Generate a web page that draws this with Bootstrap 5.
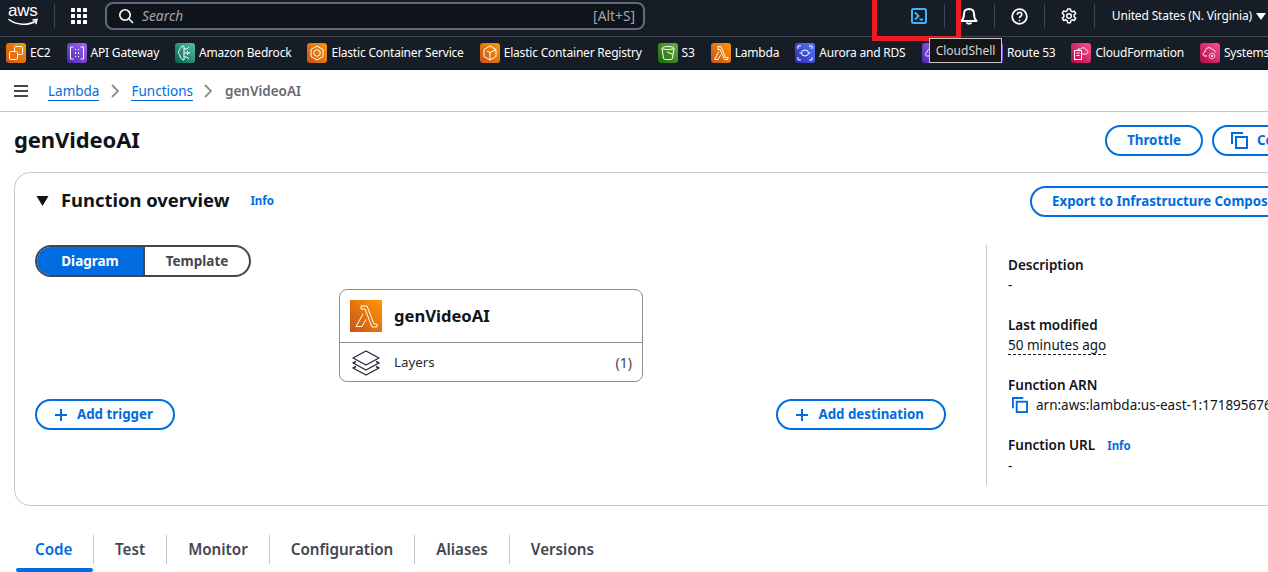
<!DOCTYPE html>
<html lang="en"><head><meta charset="utf-8"><title>genVideoAI - Lambda</title>
<link href="https://cdn.jsdelivr.net/npm/bootstrap@5.3.0/dist/css/bootstrap.min.css" rel="stylesheet">
<style>
html,body{height:572px;overflow:hidden;background:#fff}
body{font-family:"Noto Sans","Open Sans",sans-serif;color:#0f141a;font-size:14px;position:relative}
.topbar{height:37px;background:#161d26;border-bottom:1px solid #424650;color:#fff;padding:0 0 4px 8px}
.logo-box{width:30px;height:30px;position:relative;color:#fff;line-height:1}
.logo-txt{font-family:"Liberation Sans",sans-serif;font-size:17px;letter-spacing:-.3px;display:block;margin-top:1px}
.logo-smile{top:17px}
.vsep{width:1px;height:24px;background:#424650;flex:none}
.grid-ic{margin:0 17px 0 16px}
.searchbox{width:540px;height:28px;border:2px solid #5f6b7a;border-radius:8px;background:#0f141a;color:#a4a4ad;font-size:13.8px;padding:0 8px 0 11px;margin-left:1px}
.searchbox em{margin-left:8px}
.right-tools{margin-left:auto;padding-right:2px}
.tool{width:49px;display:flex;justify-content:center}
.region{font-size:12px;letter-spacing:-.14px;padding-left:17px;white-space:nowrap}
.favbar{height:32px;background:#161d26;color:#fff;font-size:12px;letter-spacing:-.2px;white-space:nowrap;padding-left:6px;gap:16px;overflow:hidden;box-shadow:0 1px 0 #0f141a}
.favitem{gap:4px;flex:none}
.svc{width:20px;height:20px;border-radius:3px;flex:none;display:block}
.crumbs{height:43px;border-bottom:1px solid #c6c6cd;padding:2px 0 0 14px;font-size:13.5px;white-space:nowrap}
.crumbs a{color:#006ce0;text-decoration:none;border-bottom:1px solid #006ce0;line-height:18px}
.crumbs .cur{color:#656871;font-weight:600}
.chev{margin:0 11.5px}
.titlerow{height:60px;padding:0 0 4px 14px}
.titlerow h1{font-size:22px;letter-spacing:-.1px;font-weight:700;margin:0 0 2px}
.titleacts{flex:0 0 163px;overflow:hidden;white-space:nowrap;gap:9px}
.btn-aws{--bs-btn-color:#006ce0;--bs-btn-border-color:#006ce0;--bs-btn-hover-color:#006ce0;--bs-btn-hover-bg:#f0fbff;--bs-btn-hover-border-color:#006ce0;--bs-btn-border-width:2px;--bs-btn-border-radius:20px;--bs-btn-font-weight:700;--bs-btn-font-size:13.3px;--bs-btn-padding-y:0;--bs-btn-padding-x:20px;height:31px;padding-top:1px;white-space:nowrap;display:inline-flex;align-items:center;justify-content:center;gap:9px;flex:none;line-height:1}
.btn-ic{margin-left:-3px}
.wthrottle{width:98px}
.ovcard{margin:0 -64px 0 14px;height:334px;border:1px solid #c6c6cd;border-radius:16px;padding:13px 20px 19px 20px}
.ovhead{height:30px}
.ovtitleblock{flex:0 0 995px;gap:0}
.tri{margin-left:1px}
.ovtitleblock h2{font-size:18.4px;font-weight:700;margin:0 21px 2px 12px}
.infolink{color:#006ce0;font-size:11.5px;font-weight:700;text-decoration:none}
.ovbody{margin-top:29px;height:240px}
.ovleft{flex:0 0 911px;height:185px}
.segs{width:216px;height:32px;border:2px solid #424650;border-radius:20px;overflow:hidden;font-weight:700;font-size:13.5px}
.segs span{display:flex;align-items:center;justify-content:center}
.seg-on{flex:0 0 108px;background:#006ce0;color:#fff;border-right:2px solid #424650}
.seg-off{flex:1;color:#424650}
.nodewrap{margin-left:304px;margin-top:12px;width:304px;height:93px;border:1px solid #8c8c94;border-radius:8px}
.nodetop{height:53px;border-bottom:1px solid #8c8c94;padding-left:10px;gap:12px;font-size:16.6px;font-weight:700}
.nodebot{height:39px;padding:0 10px 0 11px;font-size:13.3px;color:#232b37}
.nodebot .cnt{margin-left:auto;color:#424650;font-size:14px}
.lam{width:32px;height:32px;display:block}
.layers-lbl{margin-left:5px}
.addrow{margin-top:17px}
.ovright{margin-left:40px;border-left:1px solid #c6c6cd;padding-left:21px;height:240px;flex:1;white-space:nowrap;overflow:hidden;font-size:13.5px;line-height:20px}
.kv{height:60px;padding-top:10px}
.kv b{font-weight:600;display:block}
.kv .dash{display:block}
.dashed{border-bottom:1px dashed #0f141a;line-height:17px;display:inline-block}
.tabsrow{height:67px;padding:21px 0 0 16px}
.tabitem{height:29px;margin-top:8px;padding:0 21px;font-size:15.2px;font-weight:600;color:#424650;border-right:1px solid #c6c6cd;display:flex;align-items:center;position:relative;line-height:1}
.tabitem:first-child{padding:0 19px;color:#006ce0;width:78px}
.tabitem:last-child{border-right:0}
.tabbar{position:absolute;left:0;right:0;bottom:-8px;height:4px;background:#006ce0;border-radius:2px}
.redbox{position:absolute;left:872px;top:-5px;width:89px;height:46px;border:5px solid #ed1c24;pointer-events:none;z-index:5}
.tipbox{position:absolute;left:929px;top:38px;width:73px;height:25px;background:#161513;border:1px solid #c6c6cd;color:#d1d5db;font-size:12px;display:flex;align-items:center;justify-content:center;z-index:6}
</style></head>
<body>
<svg width="0" height="0" class="position-absolute">
<defs>
<linearGradient id="gO" x1="0" y1="1" x2="1" y2="0"><stop offset="0" stop-color="#c8511b"/><stop offset="1" stop-color="#ff9900"/></linearGradient>
<linearGradient id="gP" x1="0" y1="1" x2="1" y2="0"><stop offset="0" stop-color="#4d27a8"/><stop offset="1" stop-color="#a166ff"/></linearGradient>
<linearGradient id="gT" x1="0" y1="1" x2="1" y2="0"><stop offset="0" stop-color="#055f4e"/><stop offset="1" stop-color="#56c0a7"/></linearGradient>
<linearGradient id="gG" x1="0" y1="1" x2="1" y2="0"><stop offset="0" stop-color="#1b660f"/><stop offset="1" stop-color="#6cae3e"/></linearGradient>
<linearGradient id="gB" x1="0" y1="1" x2="1" y2="0"><stop offset="0" stop-color="#2e27ad"/><stop offset="1" stop-color="#527fff"/></linearGradient>
<linearGradient id="gR" x1="0" y1="1" x2="1" y2="0"><stop offset="0" stop-color="#b0084d"/><stop offset="1" stop-color="#ff4f8b"/></linearGradient>
</defs>
</svg>

<header class="topbar d-flex align-items-center">
  <div class="logo-box"><span class="logo-txt">aws</span>
    <svg class="position-absolute start-0 logo-smile" width="32" height="9" viewBox="0 0 32 9" fill="none" stroke="#fff" stroke-width="1.5" stroke-linecap="round"><path d="M1 1.5C8 7 20 8 28 3"/><path d="M25 2l4-.5-1 4"/></svg>
  </div>
  <div class="vsep ms-3"></div>
  <svg class="grid-ic" width="16" height="16" viewBox="0 0 16 16" fill="#fff"><rect width="4" height="4" rx=".5"/><rect x="6" width="4" height="4" rx=".5"/><rect x="12" width="4" height="4" rx=".5"/><rect y="6" width="4" height="4" rx=".5"/><rect x="6" y="6" width="4" height="4" rx=".5"/><rect x="12" y="6" width="4" height="4" rx=".5"/><rect y="12" width="4" height="4" rx=".5"/><rect x="6" y="12" width="4" height="4" rx=".5"/><rect x="12" y="12" width="4" height="4" rx=".5"/></svg>
  <div class="searchbox d-flex align-items-center">
    <svg width="16" height="16" viewBox="0 0 16 16" fill="none" stroke="#fff" stroke-width="1.6"><circle cx="7" cy="7" r="5.2"/><path d="M11 11l4 4"/></svg>
    <em>Search</em><span class="ms-auto">[Alt+S]</span>
  </div>
  <div class="right-tools d-flex align-items-center">
    <span class="tool"><svg width="16" height="16" viewBox="0 0 16 16" fill="none" stroke="#42b4ff" stroke-width="2"><rect x="1" y="1" width="14" height="14" rx="1.5"/><path d="M4 4.500L7.500 8 4 11.500M8.500 11.500H12"/></svg></span>
    <span class="vsep"></span>
    <span class="tool"><svg width="18" height="18" viewBox="0 0 18 18" fill="none" stroke="#fff" stroke-width="2"><path d="M1.500 14h15c-1.500-1.500-2.500-3-2.500-7 0-3-2-5-5-5S4 4 4 7c0 4-1 5.500-2.500 7z" stroke-linejoin="round"/><path d="M6.500 15.500c.5 1.500 4.500 1.500 5 0"/></svg></span>
    <span class="vsep"></span>
    <span class="tool"><svg width="17" height="17" viewBox="0 0 17 17" fill="none" stroke="#fff" stroke-width="1.800"><circle cx="8.500" cy="8.500" r="7.300"/><path d="M6.200 6.700c0-3 4.600-3 4.600-.2 0 1.800-2.300 1.700-2.300 3.600" stroke-width="1.600"/><circle cx="8.500" cy="12.500" r=".5" stroke-width="1"/></svg></span>
    <span class="vsep"></span>
    <span class="tool"><svg width="16" height="16" viewBox="0 0 16 16" fill="none" stroke="#fff" stroke-width="1.500" stroke-linejoin="round"><path d="M6.600.9h2.800l.4 2 1.500.9 2-.7 1.400 2.400-1.600 1.400v1.800l1.600 1.400-1.400 2.400-2-.7-1.500.9-.4 2H6.600l-.4-2-1.500-.9-2 .7-1.400-2.400 1.600-1.400V6.700L1.300 5.300l1.400-2.400 2 .7 1.500-.9z"/><circle cx="8" cy="8" r="2.300"/></svg></span>
    <span class="vsep"></span>
    <span class="region d-flex align-items-center">United States (N. Virginia)<svg class="ms-1" width="10" height="7" viewBox="0 0 10 7" fill="#fff"><path d="M0 0h10L5 7z"/></svg></span>
  </div>
</header>

<nav class="favbar d-flex align-items-center">
  <span class="favitem d-flex align-items-center"><svg class="svc" viewBox="0 0 20 20"><rect width="20" height="20" fill="url(#gO)"/><g fill="none" stroke="#fff"><rect x="8.500" y="3.500" width="8" height="8" rx="1"/><rect x="3.500" y="8.500" width="8" height="8" rx="1" fill="#e0701a"/></g></svg>EC2</span>
  <span class="favitem d-flex align-items-center"><svg class="svc" viewBox="0 0 20 20"><rect width="20" height="20" fill="url(#gP)"/><g fill="none" stroke="#fff"><path d="M6.500 4H3.500v12h3M13.500 4h3v12h-3"/><path d="M8.500 6v1M8.500 9v2M8.500 13v1M11.500 6v1M11.500 9v2M11.500 13v1"/></g></svg>API Gateway</span>
  <span class="favitem d-flex align-items-center"><svg class="svc" viewBox="0 0 20 20"><rect width="20" height="20" fill="url(#gT)"/><g fill="none" stroke="#fff"><path d="M9 3C6 3 5 5 5 6.500 3 8 3 11 5 12c0 3 2 5 4 5zM9 6h3l2-2M9 10h6M9 14h3l2 2M12 8l1.500 2L12 12"/></g></svg>Amazon Bedrock</span>
  <span class="favitem d-flex align-items-center"><svg class="svc" viewBox="0 0 20 20"><rect width="20" height="20" fill="url(#gO)"/><g fill="none" stroke="#fff"><path d="M10 3l6 3.500v7L10 17l-6-3.500v-7z"/><path d="M10 6.500l3 1.700v3.600l-3 1.700-3-1.700V8.200z"/></g></svg>Elastic Container Service</span>
  <span class="favitem d-flex align-items-center"><svg class="svc" viewBox="0 0 20 20"><rect width="20" height="20" fill="url(#gO)"/><g fill="none" stroke="#fff"><path d="M10 3l6 3.500v7L10 17l-6-3.500v-7z"/><path d="M10 17V9.500l6-3M10 9.500L7 8"/></g></svg>Elastic Container Registry</span>
  <span class="favitem d-flex align-items-center"><svg class="svc" viewBox="0 0 20 20"><rect width="20" height="20" fill="url(#gG)"/><g fill="none" stroke="#fff"><path d="M4 5c0-2 12-2 12 0l-1.500 10.500c0 1.500-9 1.500-9 0z"/><path d="M4 5c0 2 12 2 12 0M9 9l6 2.500"/></g></svg>S3</span>
  <span class="favitem d-flex align-items-center"><svg class="svc" viewBox="0 0 20 20"><rect width="20" height="20" fill="url(#gO)"/><path fill="none" stroke="#fff" d="M7 3.500h3l4.500 11H17v2h-3.500L9 6.500H7zM7.800 8.700L3.500 16.500H7l2.600-4.500"/></svg>Lambda</span>
  <span class="favitem d-flex align-items-center"><svg class="svc" viewBox="0 0 20 20"><rect width="20" height="20" fill="url(#gB)"/><g fill="none" stroke="#fff"><ellipse cx="10" cy="10" rx="3.500" ry="3"/><path d="M3 6V3h3M14 3h3v3M3 14v3h3M17 14v3h-3M8 6h0M12 6h0M6 10H4.500M14 10h1.500"/></g></svg>Aurora and RDS</span>
  <span class="favitem d-flex align-items-center"><svg class="svc" viewBox="0 0 20 20"><rect width="20" height="20" fill="url(#gP)"/><path fill="none" stroke="#fff" d="M5 13c-2 0-2-3 0-3.500C5 6 9 4.500 11 7c2-.5 4 1 3.500 3 2 .5 2 3 0 3z"/></svg>VPC</span>
  <span class="favitem d-flex align-items-center"><svg class="svc" viewBox="0 0 20 20"><rect width="20" height="20" fill="url(#gP)"/><circle cx="10" cy="10" r="6" fill="none" stroke="#fff"/></svg>Route 53</span>
  <span class="favitem d-flex align-items-center"><svg class="svc" viewBox="0 0 20 20"><rect width="20" height="20" fill="url(#gR)"/><g fill="none" stroke="#fff"><rect x="3.500" y="7.500" width="7" height="9"/><path d="M5.500 10h3M5.500 12.500h3M10.500 11H15c2.500 0 2.500-4 0-4-.5-2.500-4-3-5.500-1H7v1.500"/></g></svg>CloudFormation</span>
  <span class="favitem d-flex align-items-center"><svg class="svc" viewBox="0 0 20 20"><rect width="20" height="20" fill="url(#gR)"/><g fill="none" stroke="#fff"><path d="M7 13H5c-2.500 0-2.500-3.500 0-4C5 5 10 3 12 6.500c2 0 3.500 1.500 3 3"/><circle cx="12" cy="13" r="2.800" stroke-dasharray="1.500 .7"/><circle cx="12" cy="13" r=".8"/></g></svg>Systems Manager</span>
</nav>

<div class="crumbs d-flex align-items-center">
  <svg class="me-3 flex-none" width="14" height="12" viewBox="0 0 14 12" fill="none" stroke="#424650" stroke-width="2"><path d="M0 1h14M0 6h14M0 11h14"/></svg>
  <a class="ms-1" href="#">Lambda</a>
  <svg class="chev" width="9" height="14" viewBox="0 0 9 14" fill="none" stroke="#8c8c94" stroke-width="1.800"><path d="M1 1l6 6-6 6"/></svg>
  <a href="#">Functions</a>
  <svg class="chev" width="9" height="14" viewBox="0 0 9 14" fill="none" stroke="#8c8c94" stroke-width="1.800"><path d="M1 1l6 6-6 6"/></svg>
  <span class="cur">genVideoAI</span>
</div>

<div class="titlerow d-flex align-items-center justify-content-between">
  <h1>genVideoAI</h1>
  <div class="titleacts d-flex">
    <button class="btn btn-aws wthrottle" type="button">Throttle</button>
    <button class="btn btn-aws" type="button"><svg class="btn-ic" width="17" height="17" viewBox="0 0 17 17" fill="none" stroke="#006ce0" stroke-width="2"><path d="M1 12V1h11"/><rect x="5" y="5" width="11" height="11"/></svg>Copy ARN</button>
  </div>
</div>

<section class="ovcard">
  <div class="ovhead d-flex align-items-center">
    <div class="ovtitleblock d-flex align-items-center">
      <svg class="tri" width="13" height="10" viewBox="0 0 13 10" fill="#0f141a"><path d="M.5 0h12L6.500 10z"/></svg>
      <h2>Function overview</h2>
      <a class="infolink" href="#">Info</a>
    </div>
    <button class="btn btn-aws" type="button">Export to Infrastructure Composer</button>
  </div>
  <div class="ovbody d-flex">
    <div class="ovleft">
      <div class="segs d-flex"><span class="seg-on">Diagram</span><span class="seg-off">Template</span></div>
      <div class="nodewrap">
        <div class="nodetop d-flex align-items-center">
          <svg class="lam" viewBox="0 0 32 32"><defs><linearGradient id="gL" x1="0" y1="1" x2="1" y2="0"><stop offset="0" stop-color="#c8511b"/><stop offset="1" stop-color="#ff9900"/></linearGradient></defs><rect width="32" height="32" fill="url(#gL)"/><path fill="none" stroke="#fff" d="M11 6h6l7 18h3v3h-5L15 9h-4zM13 14L6 26.500h6l4-7"/></svg>
          genVideoAI
        </div>
        <div class="nodebot d-flex align-items-center">
          <svg class="me-2" width="30" height="26" viewBox="0 0 30 26" fill="none" stroke="#232b37" stroke-width="1.400" stroke-linejoin="round"><path d="M15 1l13 7-13 7L2 8z"/><path d="M5 11.500L2 13l13 7 13-7-3-1.500"/><path d="M5 16.500L2 18l13 7 13-7-3-1.500"/></svg>
          <span class="layers-lbl">Layers</span><span class="cnt">(1)</span>
        </div>
      </div>
      <div class="addrow d-flex justify-content-between">
        <button class="btn btn-aws" type="button"><svg class="btn-ic" width="14" height="14" viewBox="0 0 14 14" stroke="#006ce0" stroke-width="2"><path d="M7 1v12M1 7h12"/></svg>Add trigger</button>
        <button class="btn btn-aws" type="button"><svg class="btn-ic" width="14" height="14" viewBox="0 0 14 14" stroke="#006ce0" stroke-width="2"><path d="M7 1v12M1 7h12"/></svg>Add destination</button>
      </div>
    </div>
    <div class="ovright">
      <div class="kv"><b>Description</b><span class="dash">-</span></div>
      <div class="kv"><b>Last modified</b><span class="dashed">50 minutes ago</span></div>
      <div class="kv"><b>Function ARN</b><span class="d-flex align-items-center gap-2"><svg class="ms-1" width="16" height="16" viewBox="0 0 17 17" fill="none" stroke="#006ce0" stroke-width="2"><path d="M1 12V1h11"/><rect x="5" y="5" width="11" height="11"/></svg>arn:aws:lambda:us-east-1:171895676</span></div>
      <div class="kv"><b class="d-inline-block me-2">Function URL</b><a class="infolink ms-1" href="#">Info</a><span class="dash">-</span></div>
    </div>
  </div>
</section>

<div class="tabsrow d-flex align-items-start">
  <div class="tabitem">Code<span class="tabbar"></span></div>
  <div class="tabitem">Test</div>
  <div class="tabitem">Monitor</div>
  <div class="tabitem">Configuration</div>
  <div class="tabitem">Aliases</div>
  <div class="tabitem">Versions</div>
</div>

<div class="redbox"></div>
<div class="tipbox">CloudShell</div>
</body></html>
